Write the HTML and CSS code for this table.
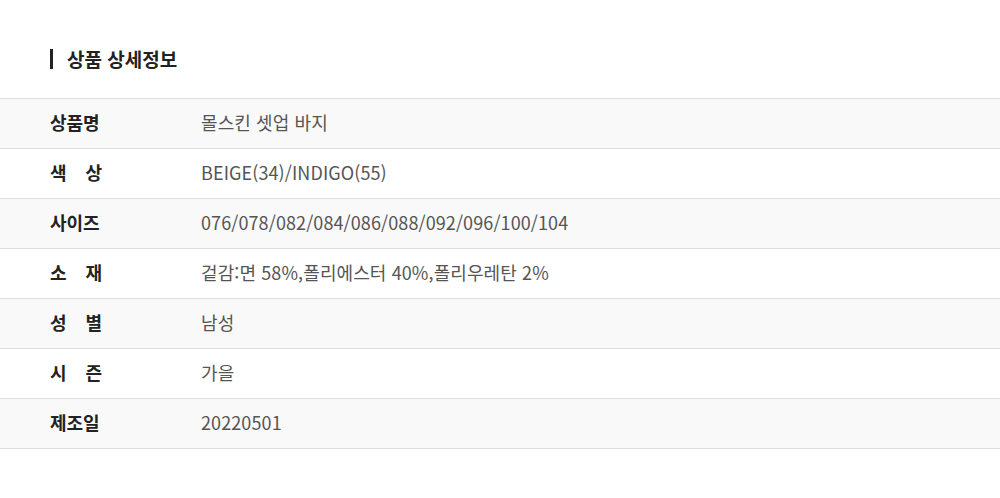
FILE: index.html
```html
<!DOCTYPE html>
<html lang="ko">
<head>
    <meta charset="UTF-8">
    <title>상품 상세정보</title>
    <link rel="stylesheet" href="styles.css">
</head>
<body>
    <div class="detail">
        <h3 class="title">상품 상세정보</h3>
        <table class="info">
            <tr><th><span>상품명</span></th><td>몰스킨 셋업 바지</td></tr>
            <tr><th><span>색 상</span></th><td>BEIGE(34)/INDIGO(55)</td></tr>
            <tr><th><span>사이즈</span></th><td>076/078/082/084/086/088/092/096/100/104</td></tr>
            <tr><th><span>소 재</span></th><td>겉감:면 58%,폴리에스터 40%,폴리우레탄 2%</td></tr>
            <tr><th><span>성 별</span></th><td>남성</td></tr>
            <tr><th><span>시 즌</span></th><td>가을</td></tr>
            <tr><th><span>제조일</span></th><td>20220501</td></tr>
        </table>
    </div>
</body>
</html>
```

FILE: styles.css
```css
body { margin: 0; font-family: "Noto Sans CJK KR", "Noto Sans", sans-serif; background: #fff; color: #222; }
.detail { padding-top: 49px; }
.title { margin: 0 0 29px 50px; padding-left: 14px; border-left: 3px solid #222; font-size: 19px; line-height: 20px; font-weight: bold; height: 20px; }
.info { width: 100%; border-collapse: collapse; border-top: 1px solid #ddd; }
.info tr { height: 50px; border-bottom: 1px solid #ddd; }
.info tr:nth-child(odd) { background: #f9f9f9; }
.info th { width: 151px; padding: 0 0 4px 50px; text-align: left; font-size: 18px; font-weight: bold; color: #222; }
.info th span { display: inline-block; width: 52px; text-align-last: justify; }
.info td { padding: 0 0 4px; font-size: 18px; color: #555; letter-spacing: 0.1px; }
```
